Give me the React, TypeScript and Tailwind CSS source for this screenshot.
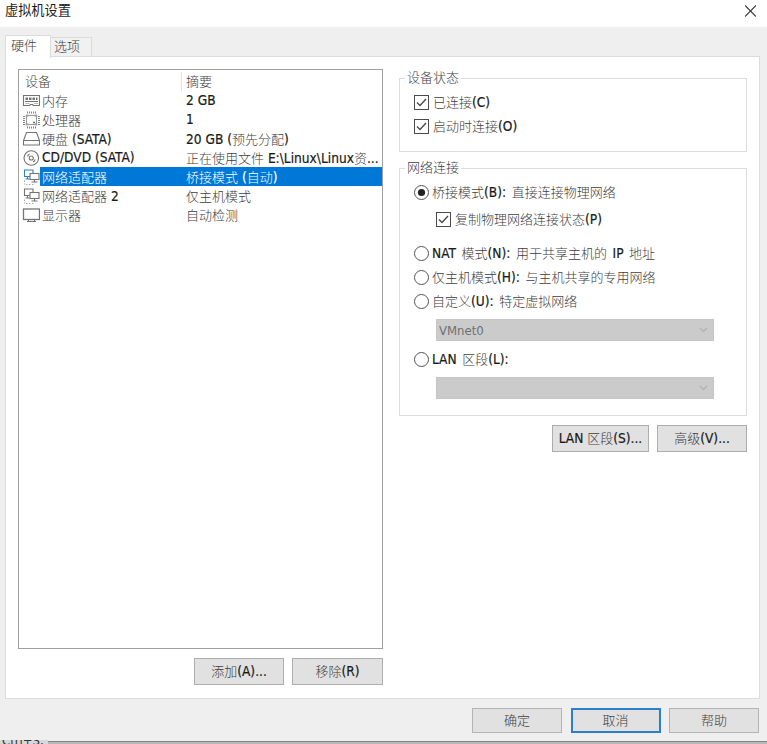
import { Fragment, type ReactNode } from 'react'
import clsx from 'clsx'

const HAN = /([\u4e00-\u9fff]+)/

// Han glyphs are drawn thinner and lighter than the latin ones
const Label = ({ text, muted }: { text: string; muted?: boolean }) => (
  <span className="pb-[2px] leading-[17px] whitespace-pre [-webkit-text-stroke:0.2px]">
    {text.split(HAN).map((part, i) =>
      HAN.test(part) ? (
        <span
          key={i}
          className={clsx(
            "font-['Noto_Sans_CJK_SC',sans-serif] text-[13px] font-light [-webkit-text-stroke:0px]",
            !muted && 'text-[#404040]',
          )}
        >
          {part}
        </span>
      ) : (
        <Fragment key={i}>{part}</Fragment>
      ),
    )}
  </span>
)

const Icon = ({ children }: { children: ReactNode }) => (
  <svg width="18" height="18" viewBox="0 0 18 18" fill="none" stroke="#747474" strokeWidth="1.1">
    {children}
  </svg>
)

const MemoryIcon = () => (
  <Icon>
    <path d="M1.5 3.5h16v10h-6l-1-1h-2l-1 1h-6z" />
    <path d="M3 9.5h13" strokeWidth="1" />
    <path d="M3.5 6.8h2.5M7 6.8h2.5M10.5 6.8h2.5M14 6.8h1.5" strokeWidth="2.6" />
    <path d="M3.5 11.5h4M12 11.5h4" strokeWidth="0.8" stroke="#aaa" />
  </Icon>
)

const CpuIcon = () => (
  <Icon>
    <path d="M6.5 4.5h-2v2M12.5 4.5h2v2M6.5 13.5h-2v-2M12.5 13.5h2v-2" strokeWidth="1.3" />
    <rect x="4.5" y="4.5" width="10" height="9" stroke="#999" />
    <path
      d="M5.5 .5v2M7.5 .5v2M9.5 .5v2M11.5 .5v2M13.5 .5v2M5.5 15.5v2M7.5 15.5v2M9.5 15.5v2M11.5 15.5v2M13.5 15.5v2"
      strokeWidth=".9"
    />
    <path
      d="M1 5.5h2M1 7.5h2M1 9.5h2M1 11.5h2M1 13.5h2M16 5.5h2M16 7.5h2M16 9.5h2M16 11.5h2M16 13.5h2"
      strokeWidth=".9"
    />
    <circle cx="12" cy="11.5" r=".5" />
  </Icon>
)

const DiskIcon = () => (
  <Icon>
    <path d="M4.5 2.5h10l3 8v4.500h-16v-4.500zM1.500 10.500h16" />
  </Icon>
)

const DiscIcon = () => (
  <Icon>
    <circle cx="9.3" cy="9" r="7.3" />
    <circle cx="9.3" cy="9" r="2" />
    <path d="M5.5 7.5a4 4 0 0 1 2-2.5M13.1 10.5a4 4 0 0 1-2 2.5" />
  </Icon>
)

const NetworkIcon = ({ active }: { active?: boolean }) => (
  <Icon>
    <path d="M8 8.500H2.500v-6.500h8.500V5.500M5.500 8.500v2.500M3.500 11h4" stroke={active ? '#2f7fc4' : '#747474'} />
    <rect x="8" y="5.500" width="9" height="6" fill="white" />
    <path d="M12.500 11.500v2.500M9.500 14h6" />
    <path d="M2.500 12.500v4M4 16.500h8" strokeDasharray="1.500 1.500" stroke="#aaa" />
  </Icon>
)

const DisplayIcon = () => (
  <Icon>
    <rect x="1.5" y="3" width="16" height="10.5" strokeWidth="1.3" />
    <path d="M6.5 13.5v2M12.5 13.5v2M5 15.5h9" />
  </Icon>
)

const devices = [
  { icon: <MemoryIcon />, name: '内存', summary: '2 GB' },
  { icon: <CpuIcon />, name: '处理器', summary: '1' },
  { icon: <DiskIcon />, name: '硬盘 (SATA)', summary: '20 GB (预先分配)' },
  { icon: <DiscIcon />, name: 'CD/DVD (SATA)', summary: '正在使用文件 E:\\Linux\\Linux资...' },
  { icon: <NetworkIcon active />, name: '网络适配器', summary: '桥接模式 (自动)', selected: true },
  { icon: <NetworkIcon />, name: '网络适配器 2', summary: '仅主机模式' },
  { icon: <DisplayIcon />, name: '显示器', summary: '自动检测' },
]

const DeviceList = () => (
  <div className="h-[580px] w-[365px] border border-[#a0a0a0] bg-white pt-[2px]">
    <div className="flex h-[19px] items-center">
      <div className="flex w-[162px] pl-[6px]">
        <Label text="设备" />
      </div>
      <div className="flex h-[19px] items-center border-l border-[#e2e2e2] pl-1">
        <Label text="摘要" />
      </div>
    </div>
    {devices.map(({ icon, name, summary, selected }) => (
      <div key={name} className="flex h-[19px] items-center pl-[3px]">
        {icon}
        <div
          className={clsx(
            'flex h-[19px] flex-1 items-center pt-[2px] pl-[2px]',
            selected && 'bg-[#0078d7] text-white',
          )}
        >
          <div className="flex w-[144px]">
            <Label text={name} muted={selected} />
          </div>
          <Label text={summary} muted={selected} />
        </div>
      </div>
    ))}
  </div>
)

const Checkbox = ({ text, className }: { text: string; className?: string }) => (
  <label className={clsx('flex h-[15px] items-center gap-1', className)}>
    <svg width="15" height="15" viewBox="0 0 15 15" fill="none" stroke="#4a4a4a">
      <rect x=".5" y=".5" width="14" height="14" />
      <path d="M3 7.5l3 3 6-6.5" strokeWidth="1.4" />
    </svg>
    <Label text={text} />
  </label>
)

const Radio = ({ text, checked, className }: { text: string; checked?: boolean; className?: string }) => (
  <label className={clsx('flex h-[15px] items-center gap-[3px] [word-spacing:1.7px]', className)}>
    <svg width="15" height="15" viewBox="0 0 15 15" fill="none" stroke="#555">
      <circle cx="7.5" cy="7.5" r="7" />
      {checked && <circle cx="7.5" cy="7.5" r="3.6" fill="#222" stroke="none" />}
    </svg>
    <Label text={text} />
  </label>
)

const Select = ({ value, className }: { value?: string; className?: string }) => (
  <div
    className={clsx(
      'ml-[22px] flex h-[22px] w-[278px] items-center justify-between border border-[#c6c6c6] bg-[#cbcbcb] pr-[5px] pl-[2px] text-[13px] text-[#707070]',
      className,
    )}
  >
    <span>{value}</span>
    <svg width="9" height="6" viewBox="0 0 9 6" fill="none" stroke="#b0b0b0" strokeWidth="1.2">
      <path d="M.8 .8l3.7 3.7L8.2 .8" />
    </svg>
  </div>
)

const Group = ({ title, className, children }: { title: string; className?: string; children: ReactNode }) => (
  <fieldset className={clsx('border border-[#dcdcdc] pl-[14px]', className)}>
    <legend className="-ml-[9px] flex h-4 items-center px-[2px]">
      <Label text={title} />
    </legend>
    {children}
  </fieldset>
)

const Button = ({ text, className }: { text: string; className?: string }) => (
  <button
    className={clsx(
      'flex items-center justify-center bg-[#e1e1e1]',
      className ?? 'h-[27px] w-[91px] border border-[#adadad]',
    )}
  >
    <Label text={text} />
  </button>
)

export default function App() {
  return (
    <div className="flex h-[744px] w-[767px] flex-col overflow-hidden bg-[#efefef] font-['DejaVu_Sans','Noto_Sans_CJK_SC',sans-serif] text-[13.6px] leading-[19px] text-[#1a1a1a] [font-stretch:condensed]">
      <header className="flex h-[27px] items-center justify-between bg-white pr-[11px] pb-[5px] pl-[5px]">
        <h1 className="pb-[3px] font-['Noto_Sans_CJK_SC',sans-serif] text-[13.2px] text-[#1a1a1a]">虚拟机设置</h1>
        <svg width="11" height="12" viewBox="0 0 11 12" stroke="#333" strokeWidth="1.1">
          <path d="M0 .5l11 11M11 .5L0 11.5" />
        </svg>
      </header>

      <nav className="flex h-[30px] items-end pt-2 pl-[5px]">
        <div className="relative -mb-px flex h-[23px] w-[46px] items-center border border-b-0 border-[#dcdcdc] bg-white pb-[2px] pl-[5px]">
          <Label text="硬件" />
        </div>
        <div className="flex h-[20px] w-[41px] items-center border border-b-0 border-l-0 border-[#dcdcdc] bg-[#f1f1f1] pb-px pl-[3px]">
          <Label text="选项" />
        </div>
      </nav>

      <main className="-mt-px ml-[5px] flex h-[643px] w-[755px] shrink-0 border border-[#dcdcdc] bg-white">
        <section className="pt-3 pl-3">
          <DeviceList />
          <div className="mt-[9px] flex justify-end gap-2">
            <Button text="添加(A)..." className="h-[27px] w-[90px] border border-[#adadad]" />
            <Button text="移除(R)" />
          </div>
        </section>

        <section className="ml-4 w-[348px] pt-[13px]">
          <Group title="设备状态" className="h-[82px]">
            <Checkbox text="已连接(C)" className="mt-[9px]" />
            <Checkbox text="启动时连接(O)" className="mt-[9px]" />
          </Group>
          <Group title="网络连接" className="mt-2 h-[256px]">
            <Radio text="桥接模式(B): 直接连接物理网络" checked className="mt-[9px]" />
            <Checkbox text="复制物理网络连接状态(P)" className="mt-3 ml-[22px]" />
            <Radio text="NAT 模式(N): 用于共享主机的 IP 地址" className="mt-[19px]" />
            <Radio text="仅主机模式(H): 与主机共享的专用网络" className="mt-[9px]" />
            <Radio text="自定义(U): 特定虚拟网络" className="mt-[9px]" />
            <Select value="VMnet0" className="mt-[10px]" />
            <Radio text="LAN 区段(L):" className="mt-[11px]" />
            <Select className="mt-[10px]" />
          </Group>
          <div className="mt-[9px] flex justify-end gap-2">
            <Button text="LAN 区段(S)..." className="h-[27px] w-[97px] border border-[#adadad]" />
            <Button text="高级(V)..." className="h-[27px] w-[90px] border border-[#adadad]" />
          </div>
        </section>
      </main>

      <footer className="flex h-[42px] shrink-0 justify-end gap-[8.5px] pt-[9px] pr-2">
        <Button text="确定" className="h-[25px] w-[90px] border border-[#b4b4b4]" />
        <Button text="取消" className="h-[25px] w-[90px] border-2 border-[#2a80cc]" />
        <Button text="帮助" className="h-[25px] w-[90px] border border-[#b4b4b4]" />
      </footer>

      {/* strip of the window that lies behind the dialog */}
      <div className="relative h-[3px] shrink-0 border-t border-[#858585] bg-[#b8b8b8]">
        <div className="absolute -top-[2px] left-0 flex h-[5px] w-[48px] items-end overflow-hidden bg-[#d8d8d8] pl-[2px] text-[13px] leading-[9px] text-[#333]">
          Ctrl+S,
        </div>
      </div>
    </div>
  )
}
